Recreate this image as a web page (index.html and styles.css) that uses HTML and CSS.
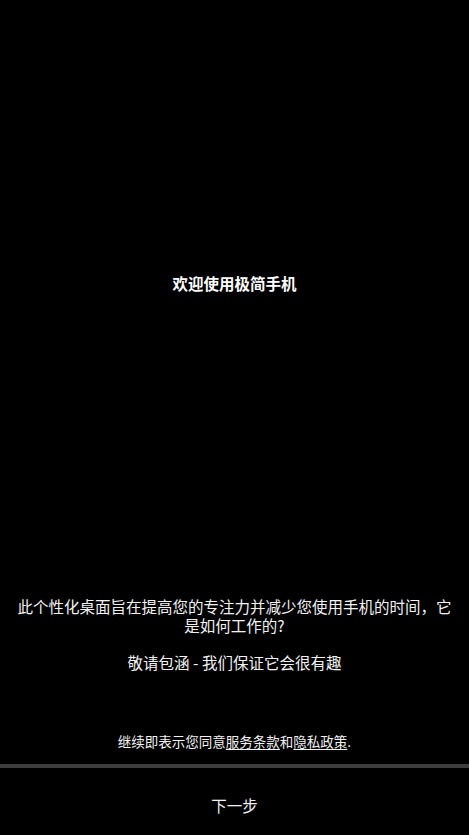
FILE: index.html
```html
<!DOCTYPE html>
<html lang="zh-CN">
<head>
<meta charset="utf-8">
<link rel="stylesheet" href="styles.css">
</head>
<body>
<div class="screen">
  <div class="content">
    <h1 class="title">欢迎使用极简手机</h1>
    <div class="intro">
      <p class="intro-line">此个性化桌面旨在提高您的专注力并减少您使用手机的时间，它是如何工作的?</p>
      <p class="intro-line intro-gap">敬请包涵 - 我们保证它会很有趣</p>
    </div>
    <p class="terms">继续即表示您同意<span class="link">服务条款</span>和<span class="link">隐私政策</span>.</p>
  </div>
  <div class="divider"></div>
  <div class="next">下一步</div>
</div>
</body>
</html>
```
FILE: styles.css
```css
html, body {
  margin: 0;
  padding: 0;
  background: #000;
}
.screen {
  width: 469px;
  height: 835px;
  display: flex;
  flex-direction: column;
  background: #000;
  color: #f2f2f2;
  font-family: "Noto Sans CJK SC", "Noto Sans", sans-serif;
}
.content {
  height: 764px;
  display: flex;
  flex-direction: column;
  align-items: center;
}
.title {
  margin: 273px 0 0;
  font-size: 15.5px;
  line-height: 20px;
  font-weight: 700;
  color: #fff;
}
.intro {
  margin-top: 304px;
  padding: 0 16px;
  text-align: center;
}
.intro-line {
  margin: 0;
  font-size: 15.5px;
  line-height: 18.5px;
}
.intro-gap {
  margin-top: 18.5px;
}
.terms {
  margin: 61px 0 0;
  font-size: 13.5px;
  line-height: 18px;
}
.link {
  text-decoration: underline;
  text-underline-offset: 2px;
}
.divider {
  height: 4px;
  background: #3d3d3d;
}
.next {
  flex: 1;
  display: flex;
  align-items: center;
  justify-content: center;
  padding-top: 6px;
  font-size: 15.5px;
  color: #f2f2f2;
}
```
